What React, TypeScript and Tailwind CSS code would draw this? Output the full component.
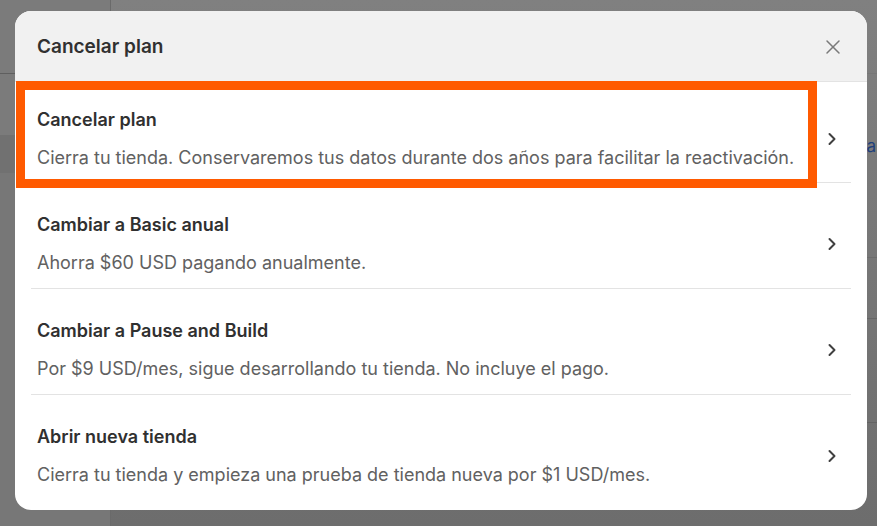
import { ChevronRight, X } from "lucide-react";

const options = [
  {
    title: "Cancelar plan",
    desc: "Cierra tu tienda. Conservaremos tus datos durante dos años para facilitar la reactivación.",
    highlighted: true,
  },
  { title: "Cambiar a Basic anual", desc: "Ahorra $60 USD pagando anualmente." },
  {
    title: "Cambiar a Pause and Build",
    desc: "Por $9 USD/mes, sigue desarrollando tu tienda. No incluye el pago.",
  },
  {
    title: "Abrir nueva tienda",
    desc: "Cierra tu tienda y empieza una prueba de tienda nueva por $1 USD/mes.",
  },
];

const Backdrop = () => {
  return (
    <div className="flex h-[526px] w-[877px] overflow-hidden">
      <div className="flex w-[110px] flex-col bg-[#7b7b7b]">
        <div className="h-[74px] border-b border-[#5f5f5f]" />
        <div className="mt-[61px] h-[38px] bg-[#717171]" />
        <div className="flex-1 bg-[#777777]" />
      </div>
      <div className="flex flex-1 flex-col bg-gradient-to-b from-[#808080] to-[#6d6d6d] border-l border-[#6a6a6a]">
        <div className="flex h-[74px] border-b border-[#777777]" />
        <div className="flex h-[183px] items-start justify-end pt-[60px] pr-[1px]">
          <span className="text-[17px] text-[#1f3f7a]">Actua</span>
        </div>
        <div className="h-[61px] border-t border-[#6c6c6c]" />
        <div className="h-[104px] border-t border-[#666666]" />
        <div className="flex-1 border-t border-[#636363]" />
      </div>
    </div>
  );
};

const OptionRow = ({ title, desc, highlighted, first, last }: { title: string; desc: string; highlighted?: boolean; first: boolean; last: boolean }) => {
  return (
    <div className={`relative flex items-center ${first ? "pt-[26px] pb-3" : "pt-[30px]"} ${last ? "pb-[25px]" : first ? "" : "pb-[13px]"} ${last ? "" : "border-b border-[#e3e3e3]"} mx-4`}>
      {highlighted && (
        <div className="pointer-events-none absolute -left-[15px] top-[-1px] bottom-[-6px] right-[34px] border-[9px] border-[#ff5a00]" />
      )}
      <div className="flex flex-1 flex-col gap-[14px] pl-[6px]">
        <div className="text-[18px] leading-6 font-semibold text-[#303030]">{title}</div>
        <div className="text-[18px] leading-6 text-[#616161]">{desc}</div>
      </div>
      <ChevronRight className="mr-[9px] h-[20px] w-[20px] text-[#404040]" strokeWidth={2.4} />
    </div>
  );
};

export default function App() {
  return (
    <div className="relative h-[526px] w-[877px] overflow-hidden" style={{ fontFamily: "Inter, 'Noto Sans', sans-serif" }}>
      <Backdrop />
      <div className="absolute left-[15px] top-[11px] flex h-[499px] w-[852px] flex-col overflow-hidden rounded-2xl bg-white">
        <div className="flex h-[71px] shrink-0 items-center justify-between border-b border-[#e3e3e3] bg-[#f1f1f1] pl-[22px] pr-[22px] pt-[2px]">
          <h2 className="text-[19px] font-semibold text-[#303030]">Cancelar plan</h2>
          <X className="h-[24px] w-[24px] text-[#7a7a7a]" strokeWidth={1.5} />
        </div>
        <div className="flex flex-col">
          {options.map((o, i) => (
            <OptionRow key={o.title} title={o.title} desc={o.desc} highlighted={o.highlighted} first={i === 0} last={i === options.length - 1} />
          ))}
        </div>
      </div>
    </div>
  );
}
